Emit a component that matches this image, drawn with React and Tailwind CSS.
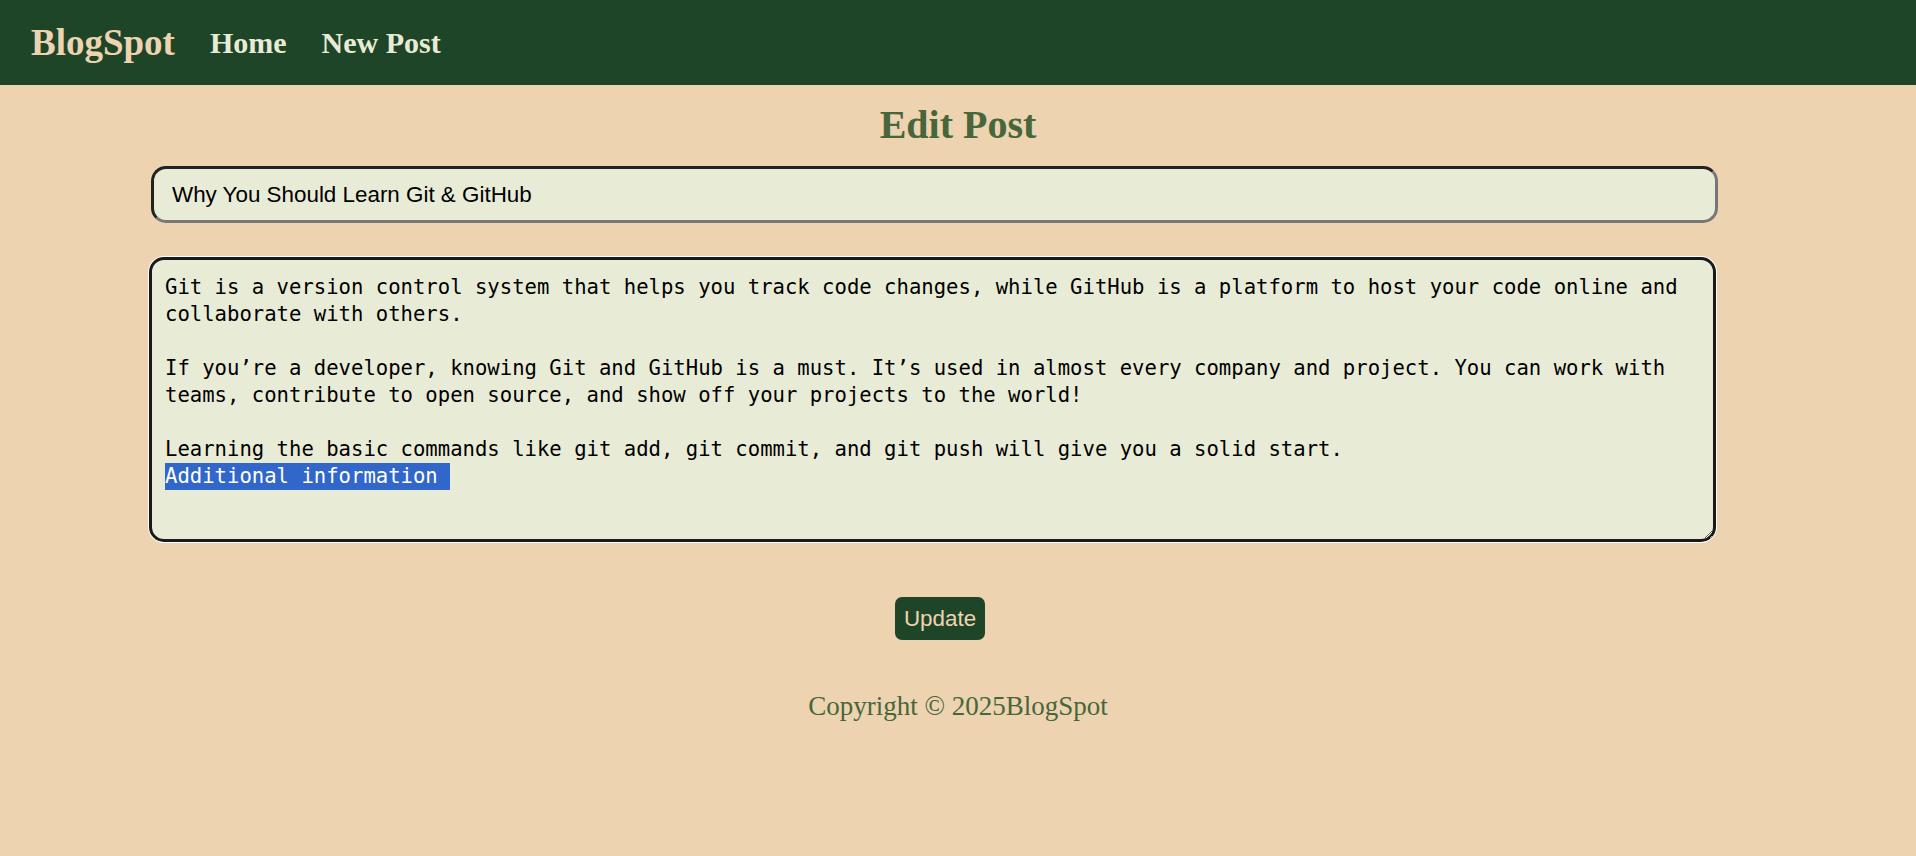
import React, { useEffect, useRef, useState } from 'react';

const BODY = `Git is a version control system that helps you track code changes, while GitHub is a platform to host your code online and collaborate with others.

If you’re a developer, knowing Git and GitHub is a must. It’s used in almost every company and project. You can work with teams, contribute to open source, and show off your projects to the world!

Learning the basic commands like git add, git commit, and git push will give you a solid start.
Additional information `;

const EditPost = () => {
  const [title, setTitle] = useState('Why You Should Learn Git & GitHub');
  const [content, setContent] = useState(BODY);
  const areaRef = useRef(null);

  // keep the last line selected, like the user just typed it
  useEffect(() => {
    const el = areaRef.current;
    if (!el) return;
    const start = BODY.indexOf('Additional information');
    el.focus({ preventScroll: true });
    el.setSelectionRange(start, BODY.length);
  }, []);

  return (
    <main className="pb-10">
      <h1 className="mt-[17px] text-center text-[40px] leading-[46px] font-bold text-[#47663B] font-['Liberation_Serif',serif]">
        Edit Post
      </h1>

      <form
        className="mt-[18px] ml-[149px] w-[1582px] flex flex-col"
        onSubmit={(e) => e.preventDefault()}
      >
        <input
          type="text"
          value={title}
          onChange={(e) => setTitle(e.target.value)}
          className="ml-[2px] w-[1567px] h-[57px] px-[18px] rounded-[15px] border-[3px] border-t-[#222] border-l-[#222] border-b-[#777] border-r-[#777] bg-[#E8ECD7] text-black text-[22.4px] outline-none font-['Liberation_Sans',Arial,sans-serif]"
        />

        <textarea
          ref={areaRef}
          value={content}
          onChange={(e) => setContent(e.target.value)}
          className="mt-[34px] w-[1567px] h-[285px] pt-[14px] px-[13px] rounded-[15px] border-[3px] border-[#1a1a1a] shadow-[0_0_0_1px_#ffffff] bg-[#E8ECD7] text-black text-[20.6px] leading-[27px] outline-none font-['DejaVu_Sans_Mono',monospace] selection:bg-[#3166CB] selection:text-white"
        />

        <button
          type="submit"
          className="self-center mt-[55px] h-[43px] px-[9px] rounded-[7px] bg-[#1F4529] text-[#EED3B1] text-[22.4px] font-['Liberation_Sans',Arial,sans-serif]"
        >
          Update
        </button>
      </form>

      <footer className="mt-[51px] text-center text-[27px] leading-[31px] text-[#47663B] font-['Liberation_Serif',serif]">
        Copyright © 2025BlogSpot
      </footer>
    </main>
  );
};

const App = () => {
  return (
    <div className="min-h-screen bg-[#EED3B1]">
      <nav className="h-[85px] bg-[#1F4529] flex items-center gap-[35px] pl-[31px] font-['Liberation_Serif',serif] font-bold">
        <a href="#" className="text-[37px] text-[#EED3B1]">BlogSpot</a>
        <a href="#" className="text-[30px] text-[#E8ECD7]">Home</a>
        <a href="#" className="text-[30px] text-[#E8ECD7]">New Post</a>
      </nav>
      <EditPost />
    </div>
  );
};

export default App;
